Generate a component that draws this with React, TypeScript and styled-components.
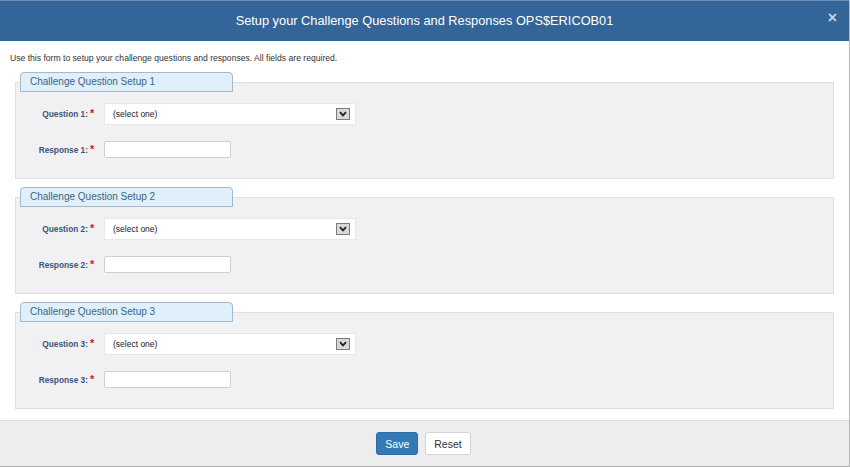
import React from "react";
import styled, { createGlobalStyle } from "styled-components";

const GlobalStyle = createGlobalStyle`
  html, body {
    margin: 0;
    padding: 0;
    background: #ffffff;
  }
  body {
    font-family: "Liberation Sans", Arial, sans-serif;
    color: #333;
  }
`;

const Modal = styled.div`
  width: 850px;
  height: 467px;
  box-sizing: border-box;
  display: flex;
  flex-direction: column;
  border-right: 1px solid #b9b9b9;
  border-bottom: 1px solid #a9a9a9;
  background: #fff;
`;

const Header = styled.div`
  height: 41px;
  box-sizing: border-box;
  background: #346598;
  border-top: 1px solid #6f90b6;
  display: flex;
  align-items: center;
  justify-content: center;
  position: relative;
`;

const Title = styled.h1`
  margin: 0 0 1px 0;
  font-size: 12.8px;
  font-weight: normal;
  color: #fff;
`;

const Close = styled.span`
  position: absolute;
  right: 12px;
  top: 9px;
  font-size: 16px;
  font-weight: bold;
  color: #c3d1e2;
  line-height: 1;
`;

const Body = styled.div`
  padding: 12px 15px 0 15px;
  display: flex;
  flex-direction: column;
`;

const Intro = styled.p`
  margin: 0 0 9px -5px;
  font-size: 8.6px;
  line-height: 10px;
  color: #333;
`;

const Section = styled.div`
  display: flex;
  flex-direction: column;
  margin-bottom: 8px;
`;

const Tab = styled.div`
  width: 213px;
  height: 20px;
  box-sizing: border-box;
  margin-left: 5px;
  padding-left: 9px;
  background: #dff0fb;
  border: 1px solid #a4b8c9;
  border-radius: 4px 4px 0 0;
  color: #3e6384;
  font-size: 10px;
  line-height: 18px;
  position: relative;
  z-index: 1;
`;

const Panel = styled.div`
  margin-top: -10px;
  height: 97px;
  box-sizing: border-box;
  background: #f1f0f3;
  border: 1px solid #e0e0e3;
  padding-top: 20px;
  display: flex;
  flex-direction: column;
  gap: 16px;
`;

const Row = styled.div`
  display: flex;
  align-items: center;
`;

const Label = styled.label`
  width: 72px;
  text-align: right;
  font-size: 8.3px;
  font-weight: bold;
  color: #3a5579;
`;

const Required = styled.span`
  width: 16px;
  color: #d0191d;
  font-weight: bold;
  font-size: 11px;
  padding-left: 2px;
  box-sizing: border-box;
  position: relative;
  top: -1px;
`;

const SelectBox = styled.div`
  width: 252px;
  height: 22px;
  box-sizing: border-box;
  background: #fff;
  border: 1px solid #e8e8ea;
  display: flex;
  align-items: center;
  justify-content: space-between;
  padding: 0 5px 0 8px;
  font-size: 8.5px;
  color: #222;
`;

const Arrow = styled.span`
  width: 14px;
  height: 12px;
  box-sizing: border-box;
  background: #d9d9d6;
  border: 1px solid #7c7c7c;
  display: flex;
  align-items: center;
  justify-content: center;
`;

const TextInput = styled.input`
  width: 127px;
  height: 17px;
  box-sizing: border-box;
  border: 1px solid #cfcfd2;
  border-radius: 2px;
  background: #fff;
  padding: 0 4px;
  margin: 0;
  font-family: inherit;
  font-size: 9px;
`;

const Footer = styled.div`
  margin-top: 3px;
  flex: 1;
  background: #ededef;
  border-top: 1px solid #dedee0;
  display: flex;
  justify-content: center;
  align-items: flex-start;
  padding-top: 11px;
  padding-right: 2px;
  gap: 7px;
`;

const Button = styled.button<{ $primary?: boolean }>`
  height: 23px;
  box-sizing: border-box;
  padding: 0 8px;
  border-radius: 3px;
  font-family: inherit;
  font-size: 10.5px;
  border: 1px solid ${(p) => (p.$primary ? "#2e6da4" : "#d4d4d4")};
  background: ${(p) => (p.$primary ? "#337ab7" : "#fff")};
  color: ${(p) => (p.$primary ? "#fff" : "#333")};
`;

function Chevron() {
  return (
    <svg width="8" height="6" viewBox="0 0 8 6">
      <path d="M1 1.2 L4 4.4 L7 1.2" fill="none" stroke="#222" strokeWidth="1.8" />
    </svg>
  );
}

function QuestionSetup({ n }: { n: number }) {
  return (
    <Section>
      <Tab>Challenge Question Setup {n}</Tab>
      <Panel>
        <Row>
          <Label>Question {n}:</Label>
          <Required>*</Required>
          <SelectBox>
            <span>(select one)</span>
            <Arrow>
              <Chevron />
            </Arrow>
          </SelectBox>
        </Row>
        <Row>
          <Label>Response {n}:</Label>
          <Required>*</Required>
          <TextInput type="text" />
        </Row>
      </Panel>
    </Section>
  );
}

export default function App() {
  return (
    <>
      <GlobalStyle />
      <Modal>
        <Header>
          <Title>Setup your Challenge Questions and Responses OPS$ERICOB01</Title>
          <Close>×</Close>
        </Header>
        <Body>
          <Intro>
            Use this form to setup your challenge questions and responses. All fields are required.
          </Intro>
          {[1, 2, 3].map((n) => (
            <QuestionSetup key={n} n={n} />
          ))}
        </Body>
        <Footer>
          <Button $primary>Save</Button>
          <Button>Reset</Button>
        </Footer>
      </Modal>
    </>
  );
}
